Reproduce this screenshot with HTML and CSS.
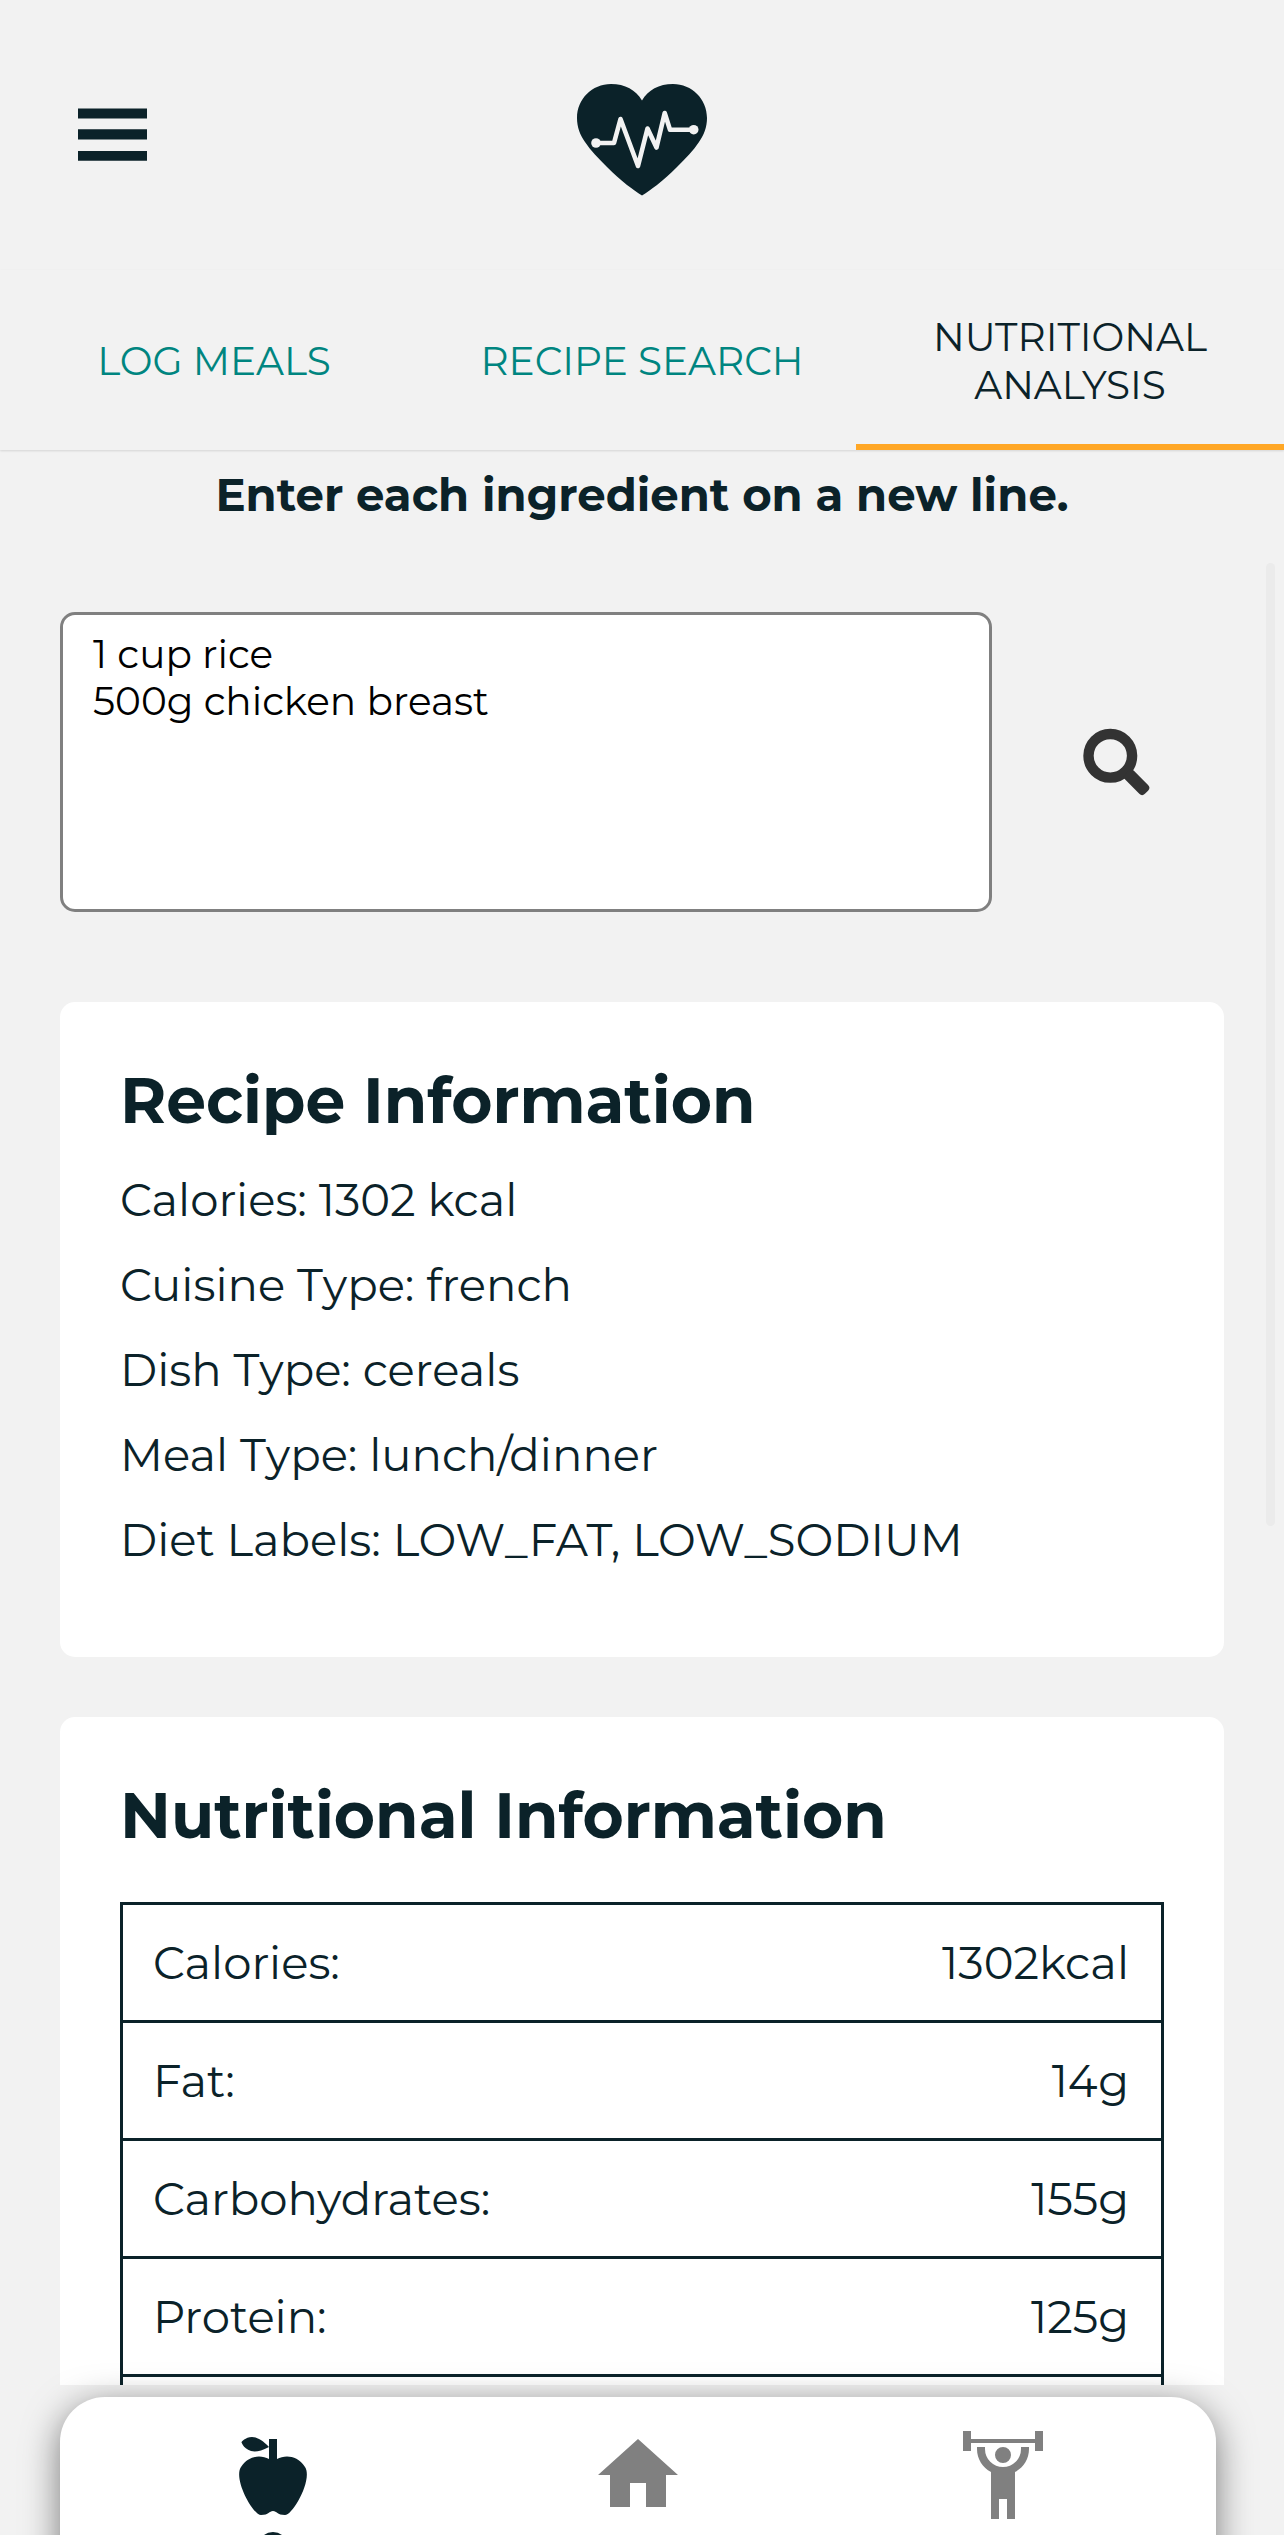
FILE: index.html
```html
<!DOCTYPE html>
<html lang="en">
<head>
<meta charset="utf-8">
<title>Nutritional Analysis</title>
<link rel="stylesheet" href="styles.css">
</head>
<body>
<div class="app">
  <header class="header">
    <button class="menu" aria-label="Menu">
      <svg width="69" height="53" viewBox="0 0 69 53"><path d="M0 .5h69v10H0zM0 21.3h69v10.2H0zM0 43h69v9.8H0z"/></svg>
    </button>
    <svg class="logo" width="160" height="140" viewBox="0 0 160 140">
      <path class="heart" d="M82 30.5C76 20 65 14 51 14C32 14 17 29 17 48C17 57 20 65 25 72C31 81 38 88 47 97C54 104 60 109.500 67 115C73 119.500 77 122.500 82 125.500C87 122.500 91 119.500 97 115C104 109.500 110 104 117 97C126 88 133 81 139 72C144 65 147 57 147 48C147 29 132 14 113 14C99 14 88 20 82 30.5Z"/>
      <path class="pulse" d="M36 73H54L60.5 49L78 96L87.5 58.5L96.5 77.5L104.7 43L110 59.7H133.5"/>
      <circle class="dot" cx="36" cy="73" r="4.8"/>
      <circle class="dot" cx="133.7" cy="59.7" r="4.8"/>
    </svg>
  </header>

  <nav class="tabs">
    <a class="tab">LOG MEALS</a>
    <a class="tab">RECIPE SEARCH</a>
    <a class="tab active">NUTRITIONAL ANALYSIS</a>
  </nav>

  <p class="hint">Enter each ingredient on a new line.</p>

  <main class="content">
    <div class="search">
      <div class="ingredients">1 cup rice<br>500g chicken breast</div>
      <button class="search-button" aria-label="Analyse">
        <svg width="68" height="68" viewBox="0 0 68 68">
          <circle cx="27.3" cy="27.8" r="21.8"/>
          <rect x="-6.2" y="-14" width="12.4" height="28" rx="4" transform="translate(53.600 54.300) rotate(-45)"/>
        </svg>
      </button>
    </div>

    <section class="card">
      <h2>Recipe Information</h2>
      <ul class="facts">
        <li>Calories: 1302 kcal</li>
        <li>Cuisine Type: french</li>
        <li>Dish Type: cereals</li>
        <li>Meal Type: lunch/dinner</li>
        <li>Diet Labels: LOW_FAT, LOW_SODIUM</li>
      </ul>
    </section>

    <section class="card nutrition">
      <h2>Nutritional Information</h2>
      <div class="table">
        <div class="row"><span>Calories:</span><span>1302kcal</span></div>
        <div class="row"><span>Fat:</span><span>14g</span></div>
        <div class="row"><span>Carbohydrates:</span><span>155g</span></div>
        <div class="row"><span>Protein:</span><span>125g</span></div>
        <div class="row"></div>
      </div>
    </section>
  </main>

  <div class="scrollbar"></div>

  <nav class="bottom-bar">
    <a class="item current">
      <svg width="96" height="96" viewBox="0 0 24 24"><path d="M20,10C22,13 17,22 15,22C13,22 13,21 12,21C11,21 11,22 9,22C7,22 2,13 4,10C6,7 9,7 11,8V5C5.38,8.07 4.11,3.78 4.11,3.78C4.11,3.78 6.77,0.19 11,5V3H13V8C15,7 18,7 20,10Z"/></svg>
      <span class="marker"></span>
    </a>
    <a class="item">
      <svg width="96" height="96" viewBox="0 0 24 24"><path d="M10,20V14H14V20H19V12H22L12,3L2,12H5V20H10Z"/></svg>
    </a>
    <a class="item">
      <svg width="96" height="96" viewBox="0 0 24 24"><path d="M12,5A2,2 0 0,1 14,7A2,2 0 0,1 12,9A2,2 0 0,1 10,7A2,2 0 0,1 12,5M22,1V6H20V4H4V6H2V1H4V3H20V1H22M15,11.26V23H13V18H11V23H9V11.26C6.93,10.17 5.5,8 5.5,5.5V5H7.5V5.5A4.5,4.5 0 0,0 12,10A4.5,4.5 0 0,0 16.5,5.5V5H18.5V5.5C18.5,8 17.07,10.17 15,11.26Z"/></svg>
    </a>
  </nav>
</div>
</body>
</html>
```
FILE: styles.css
```css
:root {
  --ink: #0b2229;
  --page: #f2f2f2;
  --teal: #008580;
  --accent: #ffa726;
  --grey: #808080;
}

* { box-sizing: border-box; }

body {
  margin: 0;
  background: var(--page);
  color: var(--ink);
  font-family: "Montserrat", "Inter", sans-serif;
}

button { border: 0; padding: 0; background: none; }
svg { display: block; }

.app {
  position: relative;
  display: flex;
  flex-direction: column;
  width: 1284px;
  height: 2535px;
  overflow: hidden;
}

.header {
  display: grid;
  grid-template-columns: 482px 160px;
  height: 270px;
  padding: 70px 78px 0;
}
.menu { justify-self: start; align-self: start; margin-top: 38px; fill: var(--ink); }
.heart { fill: var(--ink); }
.pulse { fill: none; stroke: var(--page); stroke-width: 4.6; stroke-linecap: round; stroke-linejoin: round; }
.dot { fill: var(--page); }

.tabs {
  display: grid;
  grid-template-columns: repeat(3, 1fr);
  flex: none;
  height: 180px;
  box-shadow: 0 1px 2px rgba(0, 0, 0, .12);
}
.tab {
  position: relative;
  display: flex;
  align-items: center;
  justify-content: center;
  padding: 2px 0 0;
  color: var(--teal);
  font-size: 39px;
  line-height: 48px;
  text-align: center;
}
.active { padding: 1px 60px 0; color: var(--ink); }
.active::after {
  content: "";
  position: absolute;
  inset: auto 0 0;
  height: 6px;
  background: var(--accent);
}

.hint {
  flex: none;
  height: 90px;
  margin: 0;
  padding-top: 17px;
  font-size: 45px;
  font-weight: 700;
  line-height: 55px;
  text-align: center;
}

.content {
  flex: none;
  height: 1845px;
  padding: 72px 60px 0;
  overflow: hidden;
}

.search { display: flex; align-items: center; margin-bottom: 90px; }
.ingredients {
  width: 932px;
  height: 300px;
  padding: 16px 30px;
  border: 3px solid var(--grey);
  border-radius: 15px;
  background: #fff;
  color: #000;
  font-size: 39px;
  line-height: 47px;
}
.search-button { margin-left: 90.5px; }
.search-button circle { fill: none; stroke: #333; stroke-width: 10.4; }
.search-button rect { fill: #333; }

.card {
  height: 655px;
  margin-bottom: 60px;
  padding: 60px;
  border-radius: 15px;
  background: #fff;
}
.card h2 { margin: 0 0 33px; font-size: 63px; line-height: 77px; }
.facts {
  display: grid;
  gap: 30px;
  margin: 0;
  padding: 0;
  list-style: none;
  font-size: 45px;
  line-height: 55px;
}

.nutrition { height: 900px; }
.nutrition h2 { margin-bottom: 48px; }
.table { border: 3px solid var(--ink); font-size: 45px; line-height: 55px; }
.row {
  display: flex;
  justify-content: space-between;
  height: 118px;
  padding: 30px 32px 30px 30px;
  border-bottom: 3px solid var(--ink);
}

.scrollbar {
  position: absolute;
  top: 563px;
  right: 9px;
  width: 9px;
  height: 963px;
  border-radius: 5px;
  background: #ebebeb;
}

/* Floats above the scrolled content */
.bottom-bar {
  position: absolute;
  top: 2397px;
  left: 60px;
  display: flex;
  justify-content: center;
  width: 1156px;
  height: 240px;
  padding-top: 30px;
  border-radius: 45px;
  background: #fff;
  box-shadow: 0 9px 36px rgba(0, 0, 0, .5);
}
.item {
  display: flex;
  flex-direction: column;
  align-items: center;
  gap: 8.5px;
  width: 365px;
  fill: var(--grey);
}
.current { fill: var(--ink); }
.marker { width: 30px; height: 30px; border-radius: 50%; background: var(--ink); }
```
